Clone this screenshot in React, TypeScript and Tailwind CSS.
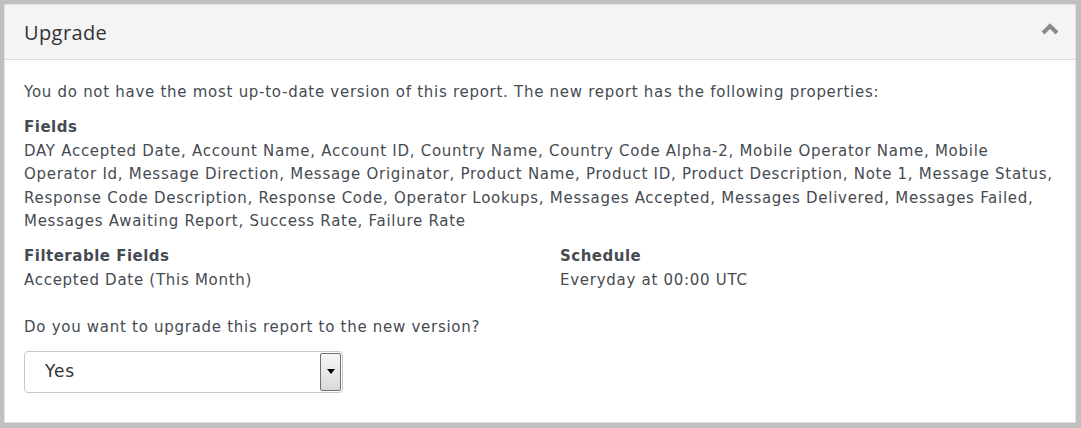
import React from "react";

const fields =
  "DAY Accepted Date, Account Name, Account ID, Country Name, Country Code Alpha-2, Mobile Operator Name, Mobile Operator Id, Message Direction, Message Originator, Product Name, Product ID, Product Description, Note 1, Message Status, Response Code Description, Response Code, Operator Lookups, Messages Accepted, Messages Delivered, Messages Failed, Messages Awaiting Report, Success Rate, Failure Rate";

const App = () => {
  return (
    <div className="w-[1081px] h-[428px] bg-[#bfbfbf] pt-[4px] pl-[4px] pr-[5px] pb-[5px]">
      <div className="h-full bg-white border border-[#e2e2e2] flex flex-col">
        {/* Header */}
        <div className="h-[55px] bg-[#f4f4f4] border-b border-[#dcdcdc] flex items-center justify-between pl-[19px] pr-[16px]">
          <h2 className="text-[20px] tracking-[0.4px] text-[#333] font-['Open_Sans',sans-serif] pt-[1px]">Upgrade</h2>
          <svg width="18" height="12" viewBox="0 0 18 12" className="mb-[6px]">
            <path d="M2 10 L9 3 L16 10" fill="none" stroke="#8a8a8a" strokeWidth="4" />
          </svg>
        </div>

        {/* Body */}
        <div className="px-[19px] pt-[21px] text-[15px] tracking-[0.72px] leading-[23.4px] text-[#454b52] font-['DejaVu_Sans','Verdana',sans-serif]">
          <p>
            You do not have the most up-to-date version of this report. The new report has the following properties:
          </p>

          <div className="mt-[12px]">
            <div className="font-bold tracking-[0.5px]">Fields</div>
            <div>{fields}</div>
          </div>

          <div className="mt-[12px] flex">
            <div className="w-[536px]">
              <div className="font-bold tracking-[0.5px]">Filterable Fields</div>
              <div>Accepted Date (This Month)</div>
            </div>
            <div>
              <div className="font-bold tracking-[0.5px]">Schedule</div>
              <div>Everyday at 00:00 UTC</div>
            </div>
          </div>

          <p className="mt-[24px]">Do you want to upgrade this report to the new version?</p>

          <div className="mt-[11px] w-[319px] h-[42px] border border-[#c8c8c8] rounded-[4px] flex items-stretch">
            <div className="flex-1 flex items-center pl-[20px] text-[17px] tracking-[0.8px] text-[#333]">Yes</div>
            <div className="w-[21px] my-[1px] mr-[1px] border border-[#707070] rounded-[2px] bg-gradient-to-b from-[#f6f6f6] to-[#dadada] flex items-center justify-center">
              <svg width="8" height="5" viewBox="0 0 8 5">
                <path d="M0 0 H8 L4 5 Z" fill="#000" />
              </svg>
            </div>
          </div>
        </div>
      </div>
    </div>
  );
};

export default App;
